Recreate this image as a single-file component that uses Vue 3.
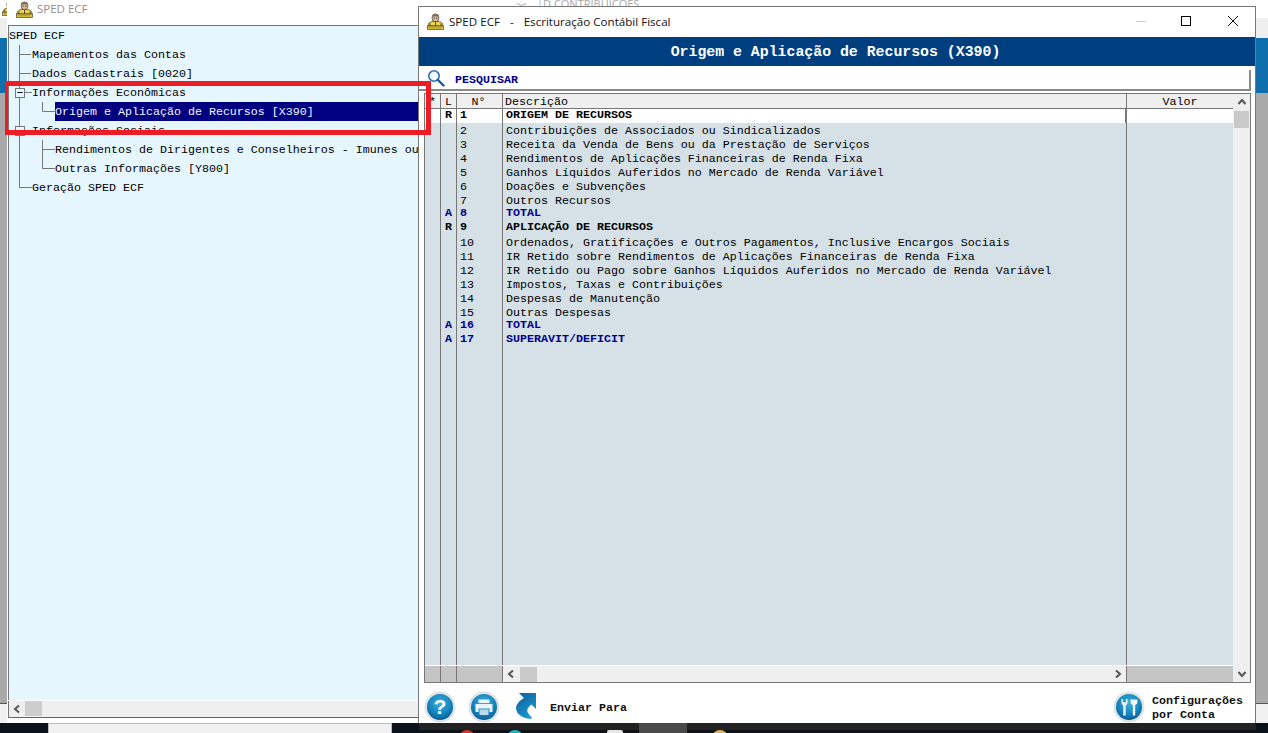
<script setup>
const tree = [
  { t: 'SPED ECF', l: 0 },
  { t: 'Mapeamentos das Contas', l: 1 },
  { t: 'Dados Cadastrais [0020]', l: 1 },
  { t: 'Informações Econômicas', l: 1 },
  { t: 'Origem e Aplicação de Recursos [X390]', l: 2, sel: true },
  { t: 'Informações Sociais', l: 1 },
  { t: 'Rendimentos de Dirigentes e Conselheiros - Imunes ou', l: 2 },
  { t: 'Outras Informações [Y800]', l: 2 },
  { t: 'Geração SPED ECF', l: 1 },
]
const rows = [
  { l: 'R', n: '1', d: 'ORIGEM DE RECURSOS', k: 'r', first: true },
  { n: '2', d: 'Contribuições de Associados ou Sindicalizados' },
  { n: '3', d: 'Receita da Venda de Bens ou da Prestação de Serviços' },
  { n: '4', d: 'Rendimentos de Aplicações Financeiras de Renda Fixa' },
  { n: '5', d: 'Ganhos Líquidos Auferidos no Mercado de Renda Variável' },
  { n: '6', d: 'Doações e Subvenções' },
  { n: '7', d: 'Outros Recursos' },
  { l: 'A', n: '8', d: 'TOTAL', k: 'a' },
  { l: 'R', n: '9', d: 'APLICAÇÃO DE RECURSOS', k: 'r' },
  { n: '10', d: 'Ordenados, Gratificações e Outros Pagamentos, Inclusive Encargos Sociais' },
  { n: '11', d: 'IR Retido sobre Rendimentos de Aplicações Financeiras de Renda Fixa' },
  { n: '12', d: 'IR Retido ou Pago sobre Ganhos Líquidos Auferidos no Mercado de Renda Variável' },
  { n: '13', d: 'Impostos, Taxas e Contribuições' },
  { n: '14', d: 'Despesas de Manutenção' },
  { n: '15', d: 'Outras Despesas' },
  { l: 'A', n: '16', d: 'TOTAL', k: 'a' },
  { l: 'A', n: '17', d: 'SUPERAVIT/DEFICIT', k: 'a' },
]
</script>

<template>
  <div class="desktop">
    <svg width="0" height="0" class="defs">
      <defs>
        <radialGradient id="orb" cx="50%" cy="35%" r="70%">
          <stop offset="0" stop-color="#3fb0dd" />
          <stop offset="0.6" stop-color="#1484bd" />
          <stop offset="1" stop-color="#07568c" />
        </radialGradient>
        <linearGradient id="arrowFill" x1="0" y1="0" x2="0.6" y2="1">
          <stop offset="0" stop-color="#0d5d96" />
          <stop offset="1" stop-color="#1b98d2" />
        </linearGradient>
        <symbol id="person" viewBox="0 0 17 17">
          <path d="M1 13 C1 9.5 4 8.5 6 8.5 H11 C13 8.5 16 9.5 16 13 Z" fill="#efd34a" stroke="#4a4630" stroke-width="0.8" />
          <rect x="5.2" y="1" width="6.6" height="7.6" rx="3" fill="#d8b898" stroke="#5a5040" stroke-width="0.8" />
          <path d="M5.2 3.6 C5.4 0.6 11.6 0.6 11.8 3.6 Z" fill="#7a6c58" />
          <rect x="6.6" y="4.6" width="1.2" height="1" fill="#333" />
          <rect x="9.2" y="4.6" width="1.2" height="1" fill="#333" />
          <path d="M3 10.5V13M14 10.5V13M8.5 9V13" stroke="#4a4630" stroke-width="1" />
          <rect x="0.5" y="13" width="16" height="3.5" fill="#e2c438" stroke="#4a4630" stroke-width="0.7" />
          <path d="M2.5 14.8H14.5" stroke="#7a6a20" stroke-width="0.8" stroke-dasharray="1.2 0.8" />
        </symbol>
      </defs>
    </svg>

    <div class="strip strip-left">
      <div class="strip-top"><svg class="peek" width="16" height="16"><use href="#person" /></svg></div>
      <div class="strip-head"></div>
      <div class="strip-blue"></div>
      <div class="strip-gray"></div>
      <div class="strip-end"></div>
    </div>
    <div class="strip strip-right">
      <div class="strip-top"></div>
      <div class="strip-head"></div>
      <div class="strip-blue"></div>
      <div class="strip-gray"></div>
      <div class="strip-end"></div>
    </div>

    <div class="ghost">
      <svg width="11" height="6" viewBox="0 0 11 6"><path d="M1 3.5L5.5 5.5L10 3.5" fill="none" stroke="#aaa" /></svg>
      <span class="ghost-text">|D CONTRIBUICOES</span>
    </div>

    <section class="win win-left">
      <header class="left-title">
        <svg width="17" height="17"><use href="#person" /></svg>
        <span>SPED ECF</span>
      </header>
      <div class="tree">
        <svg class="lines" width="60" height="180" viewBox="9 26 60 180">
          <path d="M19.5 45V187.5H32 M19.5 54.5H31 M19.5 73.5H31 M25 92.5H32 M25 130.5H32 M42.5 102V111.5H55 M42.5 140V168.5H55 M42.5 149.5H55"
            stroke="#777" fill="none" />
          <rect x="15.5" y="88.5" width="9" height="9" fill="#e6f6ff" stroke="#777" />
          <path d="M17.5 92.5H22.5" stroke="#000" />
          <rect x="15.5" y="126.5" width="9" height="9" fill="#e6f6ff" stroke="#777" />
        </svg>
        <div v-for="item in tree" :key="item.t" class="node" :class="['lv' + item.l, { sel: item.sel }]">
          <span>{{ item.t }}</span>
        </div>
      </div>
      <div class="hbar left-hbar">
        <svg class="chev" width="10" height="10" viewBox="0 0 10 10"><path d="M7 1.5 L3 5 L7 8.5" /></svg>
        <div class="thumb"></div>
      </div>
    </section>

    <section class="win win-right">
      <header class="right-title">
        <svg width="17" height="17"><use href="#person" /></svg>
        <span class="app-name">SPED ECF<span class="dash">-</span>Escrituração Contábil Fiscal</span>
        <div class="controls">
          <svg width="46" height="12" viewBox="0 0 46 12"><path d="M18 6.5H28" stroke="#c8c8c8" /></svg>
          <svg width="46" height="12" viewBox="0 0 46 12"><rect x="17.5" y="1.5" width="9" height="9" fill="none" stroke="#000" /></svg>
          <svg width="46" height="12" viewBox="0 0 46 12"><path d="M18 1L28 11M28 1L18 11" stroke="#111" /></svg>
        </div>
      </header>
      <div class="band">Origem e Aplicação de Recursos (X390)</div>
      <div class="search">
        <svg class="lens" width="18" height="18" viewBox="0 0 18 18">
          <circle cx="7" cy="7" r="5.2" fill="#f4f9fd" stroke="#2a6fb5" stroke-width="1.6" />
          <path d="M11 11L16.5 16.5" stroke="#1c5c9e" stroke-width="2.4" stroke-linecap="round" />
        </svg>
        <span>PESQUISAR</span>
      </div>
      <div class="table">
        <div class="main">
          <div class="row head">
            <div class="c">*</div><div class="c">L</div><div class="c nh">N°</div><div class="c desc">Descrição</div><div class="c">Valor</div>
          </div>
          <div v-for="r in rows" :key="r.n" class="row" :class="[r.k, { first: r.first }]">
            <div class="c"></div>
            <div class="c mark">{{ r.l }}</div>
            <div class="c num">{{ r.n }}</div>
            <div class="c desc">{{ r.d }}</div>
            <div class="c"></div>
          </div>
          <div class="row filler">
            <div class="c"></div><div class="c"></div><div class="c"></div><div class="c"></div><div class="c"></div>
          </div>
          <div class="row foot">
            <div class="c"></div><div class="c"></div><div class="c"></div>
            <div class="c hcell">
              <svg class="chev" width="10" height="10" viewBox="0 0 10 10"><path d="M7 1.5 L3 5 L7 8.5" /></svg>
              <div class="thumb"></div>
              <svg class="chev end" width="10" height="10" viewBox="0 0 10 10"><path d="M3 1.5 L7 5 L3 8.5" /></svg>
            </div>
            <div class="c"></div>
          </div>
        </div>
        <div class="vbar">
          <svg class="chev" width="10" height="10" viewBox="0 0 10 10"><path d="M1.5 7 L5 3 L8.5 7" /></svg>
          <div class="thumb"></div>
          <svg class="chev end" width="10" height="10" viewBox="0 0 10 10"><path d="M1.5 3 L5 7 L8.5 3" /></svg>
        </div>
      </div>
      <footer class="foot-bar">
        <svg class="orb" width="32" height="32" viewBox="0 0 32 32">
          <circle cx="16" cy="16" r="15.5" fill="#dfe3e6" />
          <circle cx="16" cy="16" r="13" fill="url(#orb)" />
          <text x="16" y="23" text-anchor="middle" class="q">?</text>
        </svg>
        <svg class="orb print" width="32" height="32" viewBox="0 0 32 32">
          <circle cx="16" cy="16" r="15.5" fill="#dfe3e6" />
          <circle cx="16" cy="16" r="13" fill="url(#orb)" />
          <path d="M10.5 8.5H21.5V12H10.5Z" fill="#e8f4fa" />
          <path d="M7.5 13H24.5V21H21.5V17.5H10.5V21H7.5Z" fill="#e8f4fa" />
          <path d="M11.5 18.5H20.5V24H11.5Z" fill="#bcd9e8" />
        </svg>
        <svg class="send" width="22" height="27" viewBox="0 0 22 27">
          <path d="M4 0H21V16L16.5 11.5C13 14 11 17 13 20C14.5 22.5 17 24 17 25.5C12 26.5 6 24 2.5 20C-0.5 15 1 10 9 5Z" fill="url(#arrowFill)" />
        </svg>
        <span class="send-label">Enviar Para</span>
        <svg class="orb tools" width="32" height="32" viewBox="0 0 32 32">
          <circle cx="16" cy="16" r="15.5" fill="#dfe3e6" />
          <circle cx="16" cy="16" r="13" fill="url(#orb)" />
          <path d="M8.5 8V11.5C8.5 13 9.5 14 10.3 14.3V24.5H12.7V14.3C13.5 14 14.5 13 14.5 11.5V8H13V10.8C13 11.6 10 11.6 10 10.8V8Z" fill="#eef7fb" />
          <path d="M17.5 8.5H24.5V11C24.5 12.5 23.3 13.6 22.2 13.9V24.5H19.8V13.9C18.7 13.6 17.5 12.5 17.5 11Z" fill="#eef7fb" />
        </svg>
        <span class="conf-label">Configurações<br />por Conta</span>
      </footer>
    </section>

    <div class="redbox"></div>

    <div class="taskbar">
      <div class="searchbox"></div>
      <div class="shadow"></div>
      <div class="active"></div>
      <i class="tray red"></i>
      <i class="tray teal"></i>
      <i class="tray white"></i>
      <i class="tray yellow"></i>
    </div>
  </div>
</template>

<style>
html, body { margin: 0; padding: 0; background: #fff; overflow: hidden; }
</style>

<style scoped>
.desktop {
  position: relative;
  width: 1268px;
  height: 733px;
  overflow: hidden;
  background: #fff;
  font-family: "Liberation Mono", "Courier New", monospace;
  font-size: 11.67px;
  color: #000;
}
.defs { position: absolute; }

.strip { position: absolute; top: 0; height: 723px; display: flex; flex-direction: column; overflow: hidden; }
.strip-left { left: 0; width: 7px; }
.strip-right { left: 1256px; width: 12px; }
.strip-top { height: 18px; background: #fff; }
.strip-head { height: 20px; background: #efefef; }
.strip-blue { height: 55px; background: #0f6fad; }
.strip-gray { height: 610px; background: #a9a9a9; border-bottom: 1px solid #555; }
.strip-end { flex: 1; background: #f1f1f1; }
.peek { margin: 0 0 0 2px; }

.ghost {
  position: absolute;
  left: 516px;
  top: 0;
  height: 6px;
  overflow: hidden;
  display: flex;
  gap: 10px;
  color: #a8a8a8;
  font-family: "Open Sans", sans-serif;
  font-size: 11px;
  line-height: 14px;
}
.ghost-text { margin-top: -3px; white-space: nowrap; }

.win { position: absolute; display: flex; flex-direction: column; background: #fff; }
.win-left { left: 7px; top: 0; width: 411px; height: 723px; }
.win-right {
  left: 418px;
  top: 6px;
  width: 838px;
  height: 717px;
  box-sizing: border-box;
  border: solid #777;
  border-width: 1px 1px 0;
}

.left-title {
  height: 25px;
  display: flex;
  align-items: flex-start;
  padding: 1px 0 0 9px;
  gap: 4px;
  font-family: "Open Sans", sans-serif;
  font-size: 11.5px;
  line-height: 16px;
  color: #8f8f8f;
  box-sizing: border-box;
}
.tree {
  position: relative;
  flex: 1;
  margin-left: 1px;
  border-top: 1px solid #777;
  border-left: 1px solid #777;
  background: #e6f6ff;
  overflow: hidden;
  min-height: 0;
}
.lines { position: absolute; left: 0; top: 0; }
.node { height: 19px; line-height: 21px; white-space: nowrap; position: relative; }
.lv0 { padding-left: 0; }
.lv1 { padding-left: 23px; }
.lv2 { padding-left: 46px; }
.sel span { display: block; height: 19px; background: #000080; color: #f4f4ff; }

.hbar { display: flex; align-items: flex-start; background: #efefef; }
.left-hbar {
  height: 17px;
  margin: 1px 0 5px 1px;
  box-sizing: border-box;
  border-left: 1px solid #777;
  border-bottom: 1px solid #666;
  padding-left: 3px;
}
.left-hbar .chev { margin-top: 3px; }
.left-hbar .thumb { width: 17px; height: 15px; margin-left: 3px; background: #cdcdcd; }
.chev { flex: none; display: block; }
.chev path { fill: none; stroke: #555; stroke-width: 2; }

.right-title {
  height: 30px;
  box-sizing: border-box;
  padding: 0 0 2px 8px;
  display: flex;
  align-items: center;
  font-family: "Open Sans", sans-serif;
  font-size: 11.6px;
  color: #111;
}
.app-name { margin-left: 5px; white-space: nowrap; }
.dash { margin: 0 10px; }
.controls { margin-left: auto; display: flex; margin-right: -1px; }
.band {
  height: 29px;
  padding-right: 3px;
  background: #003f7f;
  color: #fff;
  font-weight: 700;
  font-size: 14.85px;
  line-height: 30px;
  text-align: center;
}
.search {
  height: 25px;
  margin: 0 4px 2px 0;
  box-sizing: border-box;
  display: flex;
  align-items: center;
  padding: 4px 0 0 8px;
  gap: 10px;
  border-bottom: 2px solid #8a8a8a;
  color: #00008b;
  font-weight: 700;
  position: relative;
}
.lens { margin: -3px 0 0 0; }
.search::after {
  content: "";
  position: absolute;
  right: 0;
  top: 4px;
  bottom: 0;
  width: 2px;
  background: #8a8a8a;
}
.table {
  margin: 0 4px 0 5px;
  height: 590px;
  box-sizing: border-box;
  border: 1px solid #777;
  display: flex;
}
.main { width: 808px; display: flex; flex-direction: column; }
.row {
  display: grid;
  grid-template-columns: 16px 16px 46px 624px 106px;
  height: 14px;
  background: #d5e0e7;
  flex: none;
}
.c {
  border-right: 1px solid #777;
  white-space: nowrap;
  line-height: 16px;
}
.c:last-child { border-right: 0; }
.desc { padding-left: 3px; }
.num { padding-left: 3px; }
.mark { text-align: center; }
.head {
  height: 14px;
  background: #efefef;
  border-bottom: 1px solid #777;
  text-align: center;
}
.head .c { line-height: 16px; }
.head .nh { padding-right: 2px; }
.head .desc { text-align: left; padding-left: 2px; }
.first { background: #fff; }
.first .c:nth-child(4) { border-right-width: 2px; }
.r, .a { font-weight: 700; }
.a .mark, .a .num, .a .desc { color: #00008b; }
.r .c, .a .c { line-height: 13px; }
.filler { flex: 1; }
.foot { height: 17px; background: #c5c5c5; border-top: 1px solid #fff; box-sizing: border-box; }
.hcell { display: flex; align-items: center; background: #efefef; padding-left: 3px; }
.hcell .thumb { width: 17px; height: 15px; margin-left: 4px; background: #c9c9c9; }
.hcell .end { margin-left: auto; margin-right: 3px; }
.vbar {
  flex: 1;
  background: #efefef;
  display: flex;
  flex-direction: column;
  align-items: center;
}
.vbar .chev { margin-top: 3px; }
.vbar .thumb { width: 15px; height: 17px; margin-top: 4px; background: #c9c9c9; }
.vbar .end { margin-top: auto; margin-bottom: 3px; }

.foot-bar {
  flex: 1;
  display: flex;
  align-items: center;
  padding: 8px 0 0 5px;
  font-weight: 700;
  color: #111;
}
.orb { flex: none; }
.print { margin-left: 12px; }
.send { margin-left: 15px; margin-top: -1px; flex: none; }
.send-label { margin: 2px 0 0 13px; white-space: nowrap; }
.tools { margin-left: auto; }
.conf-label { margin: 2px 12px 0 7px; line-height: 14px; white-space: nowrap; }
.q { font-family: "Liberation Sans", sans-serif; font-weight: 700; font-size: 21px; fill: #fff; }

.redbox {
  position: absolute;
  left: 5px;
  top: 81px;
  width: 426px;
  height: 54px;
  box-sizing: border-box;
  border: solid #ee1c25;
  border-width: 5px 5px 5px 3px;
}

.taskbar { position: absolute; left: 0; top: 723px; width: 1268px; height: 10px; background: #0b1219; overflow: hidden; }
.searchbox {
  position: absolute;
  left: 48px;
  top: 0;
  width: 344px;
  height: 10px;
  box-sizing: border-box;
  background: #f1f1f1;
  border: 1px solid #bbb;
  border-bottom: 0;
}
.shadow { position: absolute; left: 419px; top: 0; width: 837px; height: 7px; background: #222; }
.active { position: absolute; left: 639px; top: 0; width: 48px; height: 10px; background: #4a4a4a; }
.tray { position: absolute; top: 7px; width: 16px; height: 16px; border-radius: 50%; }
.red { left: 459px; background: #d8352a; }
.teal { left: 507px; background: #24b4c4; }
.white { left: 607px; background: #e6e6e6; border-radius: 2px; }
.yellow { left: 712px; background: #d9b45a; }
</style>
